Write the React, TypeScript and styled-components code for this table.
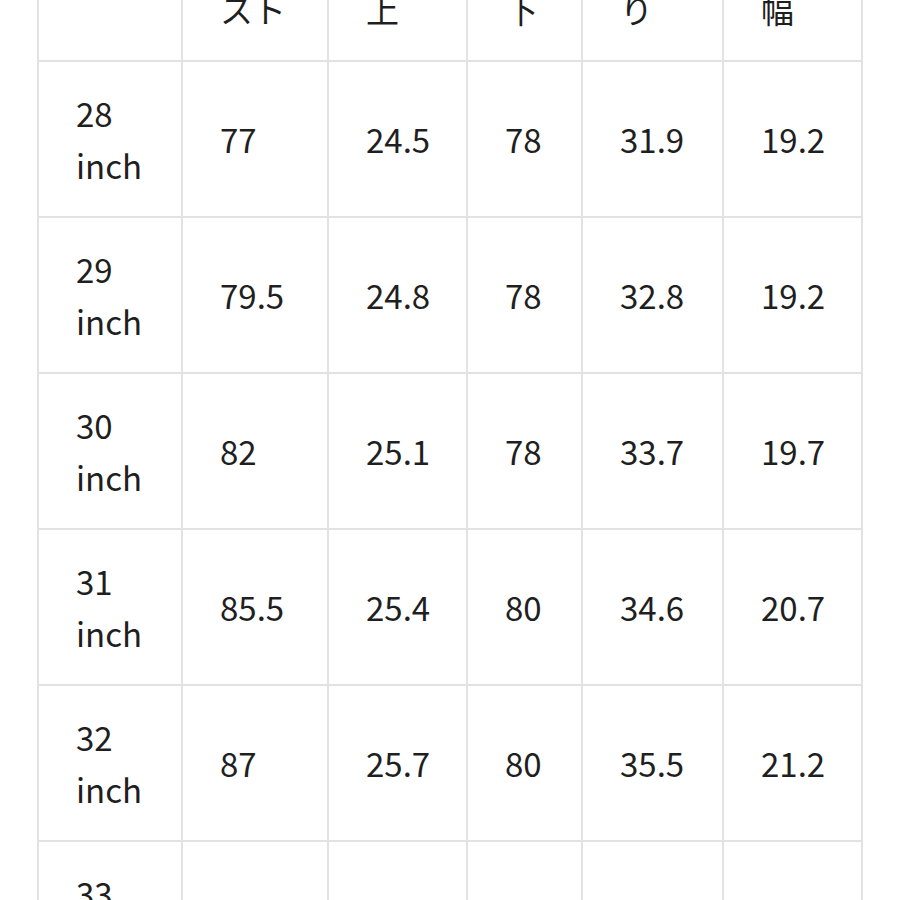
import React from 'react'
import styled, { createGlobalStyle } from 'styled-components'

const GlobalStyle = createGlobalStyle`
  html, body {
    margin: 0;
    padding: 0;
    background: #ffffff;
  }
`

const S = {
  Page: styled.div`
    width: 896px;
    height: 900px;
    overflow: hidden;
    border-right: 2px solid #5a5a5a;
    background: #ffffff;
    padding-left: 37px;
    box-sizing: content-box;
    font-family: 'Noto Sans CJK JP', 'Noto Sans', sans-serif;
    color: #1f1f1f;
  `,
  Table: styled.table`
    margin-top: -96px;
    border-collapse: collapse;
    table-layout: fixed;
    font-size: 33px;
    line-height: 52px;
  `,
  HeadCell: styled.th`
    border: 2px solid #e2e2e2;
    padding: 25px 28px 25px 37px;
    text-align: left;
    vertical-align: bottom;
    font-weight: 400;
    white-space: nowrap;
  `,
  Cell: styled.td`
    border: 2px solid #e2e2e2;
    padding: 25px 28px 25px 37px;
    text-align: left;
    vertical-align: middle;
    height: 104px;
  `,
  Line: styled.span`
    display: block;
  `,
}

const columnWidths = [144, 146, 139, 115, 141, 139]

const headers: string[][] = [[], ['ウエ', 'スト'], ['股', '上'], ['股', '下'], ['わた', 'り'], ['裾', '幅']]

const rows = [
  { size: '28', values: ['77', '24.5', '78', '31.9', '19.2'] },
  { size: '29', values: ['79.5', '24.8', '78', '32.8', '19.2'] },
  { size: '30', values: ['82', '25.1', '78', '33.7', '19.7'] },
  { size: '31', values: ['85.5', '25.4', '80', '34.6', '20.7'] },
  { size: '32', values: ['87', '25.7', '80', '35.5', '21.2'] },
  { size: '33', values: ['', '', '', '', ''] },
]

export default function App() {
  return (
    <>
      <GlobalStyle />
      <S.Page>
        <S.Table>
          <colgroup>
            {columnWidths.map((w, i) => (
              <col key={i} style={{ width: w }} />
            ))}
          </colgroup>
          <thead>
            <tr>
              {headers.map((lines, i) => (
                <S.HeadCell key={i}>
                  {lines.map((l) => (
                    <S.Line key={l}>{l}</S.Line>
                  ))}
                </S.HeadCell>
              ))}
            </tr>
          </thead>
          <tbody>
            {rows.map((row) => (
              <tr key={row.size}>
                <S.Cell>
                  <S.Line>{row.size}</S.Line>
                  <S.Line>inch</S.Line>
                </S.Cell>
                {row.values.map((v, i) => (
                  <S.Cell key={i}>{v}</S.Cell>
                ))}
              </tr>
            ))}
          </tbody>
        </S.Table>
      </S.Page>
    </>
  )
}
